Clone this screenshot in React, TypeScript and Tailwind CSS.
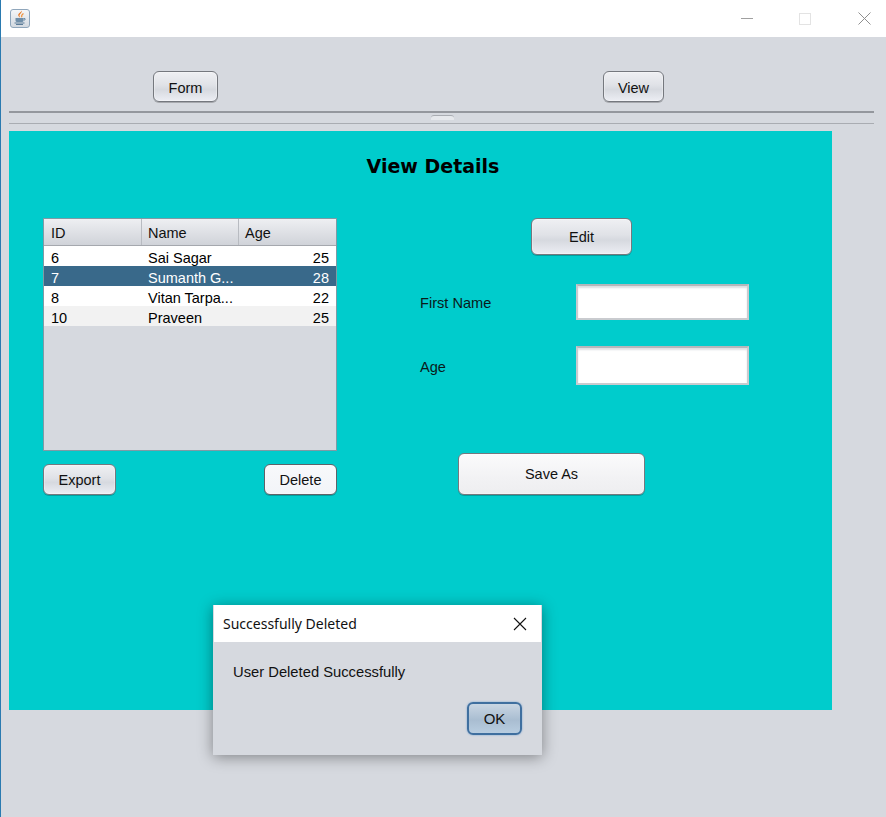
import React from 'react';

const font = "font-['Liberation_Sans',Arial,sans-serif]";
const nimbus =
  'bg-[linear-gradient(180deg,#eff0f3_0%,#e0e2e7_45%,#d6d9df_60%,#eceef4_100%)] border border-[#75787e] rounded-[6px] text-[14.5px] text-[#111] flex items-center justify-center pt-[2px] shadow-[inset_0_0_0_1px_rgba(255,255,255,0.3),0_1px_0_rgba(0,0,0,0.22)]';

const rows = [
  { id: '6', name: 'Sai Sagar', age: '25', cls: 'bg-white text-black' },
  { id: '7', name: 'Sumanth G...', age: '28', cls: 'bg-[#39698a] text-white' },
  { id: '8', name: 'Vitan Tarpa...', age: '22', cls: 'bg-white text-black' },
  { id: '10', name: 'Praveen', age: '25', cls: 'bg-[#f2f2f2] text-black' },
];

const JavaIcon = () => (
  <div className="w-[20px] h-[19px] rounded-[3px] border border-[#8fa6bb] bg-[linear-gradient(180deg,#f4f6f8,#d3d9e0)] flex items-center justify-center">
    <svg width="16" height="16" viewBox="0 0 16 16" fill="none">
      <path d="M9.500 .5c1 2.500-2.500 3.500-2 5.500.2.8.7 1.500.7 1.500C5.500 6 6 4 7.500 3 8.300 2.400 9.300 1.500 9.500 .5z" fill="#e8741c" />
      <path d="M11.500 3.500c-1.500 1-2.500 2-1.700 3.800" stroke="#ee9440" strokeWidth="1.200" />
      <path d="M3.500 8h8v2.500c0 1-1 1.500-2 1.500h-4c-1 0-2-.5-2-1.500z" fill="#6f8ea8" />
      <path d="M11.500 8.500h1.500v1.500h-1.500" stroke="#6f8ea8" strokeWidth="1" />
      <path d="M2.500 13h10M4 14.500h7" stroke="#5b7c98" strokeWidth="1" />
    </svg>
  </div>
);

const App: React.FC = () => {
  return (
    <div className={`relative w-[886px] h-[817px] overflow-hidden bg-[#d6d9df] border-l border-[#2a7ab0] flex flex-col ${font}`}>
      {/* Title bar */}
      <div className="h-[37px] bg-white flex items-center shrink-0">
        <div className="ml-[9px] mb-[1px]">
          <JavaIcon />
        </div>
        <div className="ml-auto flex items-center">
          <div className="w-[12px] h-px bg-[#a0a0a0] mr-[46px]" />
          <div className="w-[12px] h-[12px] border border-[#e3e3e3] mr-[47px]" />
          <svg width="13" height="13" viewBox="0 0 13 13" className="mr-[15px]" stroke="#8f8f8f" strokeWidth="1">
            <path d="M.5.500l12 12M12.500.500l-12 12" />
          </svg>
        </div>
      </div>

      {/* Toolbar */}
      <div className="h-[74px] shrink-0 flex items-start pt-[34px]">
        <div className={`${nimbus} !pt-[4px] ml-[152px] w-[65px] h-[31px]`}>Form</div>
        <div className={`${nimbus} !pt-[4px] ml-[385px] w-[61px] h-[31px]`}>View</div>
      </div>

      {/* Split divider */}
      <div className="relative h-[13px] w-[865px] ml-[8px] shrink-0 border-t-2 border-b border-t-[#94979d] border-b-[#a9acb2]">
        <div className="absolute left-[422px] top-[2px] w-[23px] h-[5px] rounded-t-[3px] bg-[#e6e8ec] border-t border-[#a9acb2]" />
      </div>

      {/* Teal panel */}
      <div className="mt-[7px] ml-[8px] w-[823px] h-[579px] bg-[#00cccc] shrink-0 flex flex-col">
        <h1 className="h-[87px] pt-[21px] pl-[25px] text-center font-['DejaVu_Sans',sans-serif] font-bold text-[19px] leading-[28px] text-black">
          View Details
        </h1>

        <div className="flex">
          {/* Left column: table */}
          <div className="ml-[34px] w-[294px]">
            <div className="h-[233px] bg-[#d6d9df] border border-[#7f9aa5]">
              <div className="h-[27px] grid grid-cols-[98px_97px_1fr] border-b border-[#a5a8ae] bg-[linear-gradient(180deg,#eeeff2_0%,#dcdee3_60%,#d0d3d9_100%)] text-[14.5px] text-[#111]">
                <div className="pl-[7px] pt-[4px] flex items-center border-r border-[#b8bbc1]">ID</div>
                <div className="pl-[6px] pt-[4px] flex items-center border-r border-[#b8bbc1]">Name</div>
                <div className="pl-[6px] pt-[4px] flex items-center">Age</div>
              </div>
              <div>
                {rows.map((r) => (
                  <div key={r.id} className={`h-[20px] pt-[4px] grid grid-cols-[97px_98px_1fr] text-[14.5px] leading-[16px] ${r.cls}`}>
                    <div className="pl-[7px]">{r.id}</div>
                    <div className="pl-[7px]">{r.name}</div>
                    <div className="pr-[7px] text-right">{r.age}</div>
                  </div>
                ))}
              </div>
            </div>
            <div className="mt-[13px] flex justify-between">
              <div className={`${nimbus} w-[73px] h-[31px]`}>Export</div>
              <div className={`${nimbus} w-[73px] h-[31px] !bg-[linear-gradient(180deg,#f8f9fb_0%,#f2f4f8_100%)] !border-[#5f6268]`}>Delete</div>
            </div>
          </div>

          {/* Right column: form */}
          <div className="ml-[83px] w-[330px] flex flex-col">
            <div className={`${nimbus} ml-[111px] w-[101px] h-[37px]`}>Edit</div>
            <div className="mt-[29px] flex items-center h-[36px]">
              <span className="w-[156px] pt-[4px] text-[14.6px] text-[#0a1a1a]">First Name</span>
              <div className="w-[173px] h-[36px] bg-white border-2 border-[#c9cbcf] border-t-[#b5b7bb] shadow-[inset_0_2px_2px_#dedfe2]" />
            </div>
            <div className="mt-[26px] flex items-center h-[39px]">
              <span className="w-[156px] pt-[4px] text-[14.6px] text-[#0a1a1a]">Age</span>
              <div className="w-[173px] h-[39px] bg-white border-2 border-[#c9cbcf] border-t-[#b5b7bb] shadow-[inset_0_2px_2px_#dedfe2]" />
            </div>
            <div className={`${nimbus} !bg-[linear-gradient(180deg,#fbfbfc_0%,#f2f2f4_60%,#eeeef0_100%)] mt-[68px] ml-[38px] w-[187px] h-[42px]`}>
              Save As
            </div>
          </div>
        </div>
      </div>

      {/* Message dialog */}
      <div className="absolute left-[212px] top-[605px] w-[329px] h-[150px] bg-[#d6d9df] shadow-[0_2px_14px_rgba(0,0,0,0.4)] flex flex-col">
        <div className="h-[37px] mx-px bg-white flex items-center justify-between pl-[9px] pr-[14px] shrink-0">
          <span className="font-['Noto_Sans',sans-serif] text-[14px] text-[#111]">Successfully Deleted</span>
          <svg width="14" height="14" viewBox="0 0 14 14" stroke="#111" strokeWidth="1.100" fill="none">
            <path d="M1 1l12 12M13 1L1 13" />
          </svg>
        </div>
        <div className="pl-[20px] pt-[21px] text-[14.75px] leading-[18px] text-[#111]">User Deleted Successfully</div>
        <div className="mt-auto mb-[20px] mr-[20px] self-end w-[55px] h-[33px] pt-[2px] rounded-[6px] border-2 border-[#3f6f9f] bg-[linear-gradient(180deg,#c9d6e3_0%,#a9bdd1_55%,#b8cde0_100%)] shadow-[0_0_2px_#6f9fd0] flex items-center justify-center text-[15px] text-[#111]">
          OK
        </div>
      </div>
    </div>
  );
};

export default App;
